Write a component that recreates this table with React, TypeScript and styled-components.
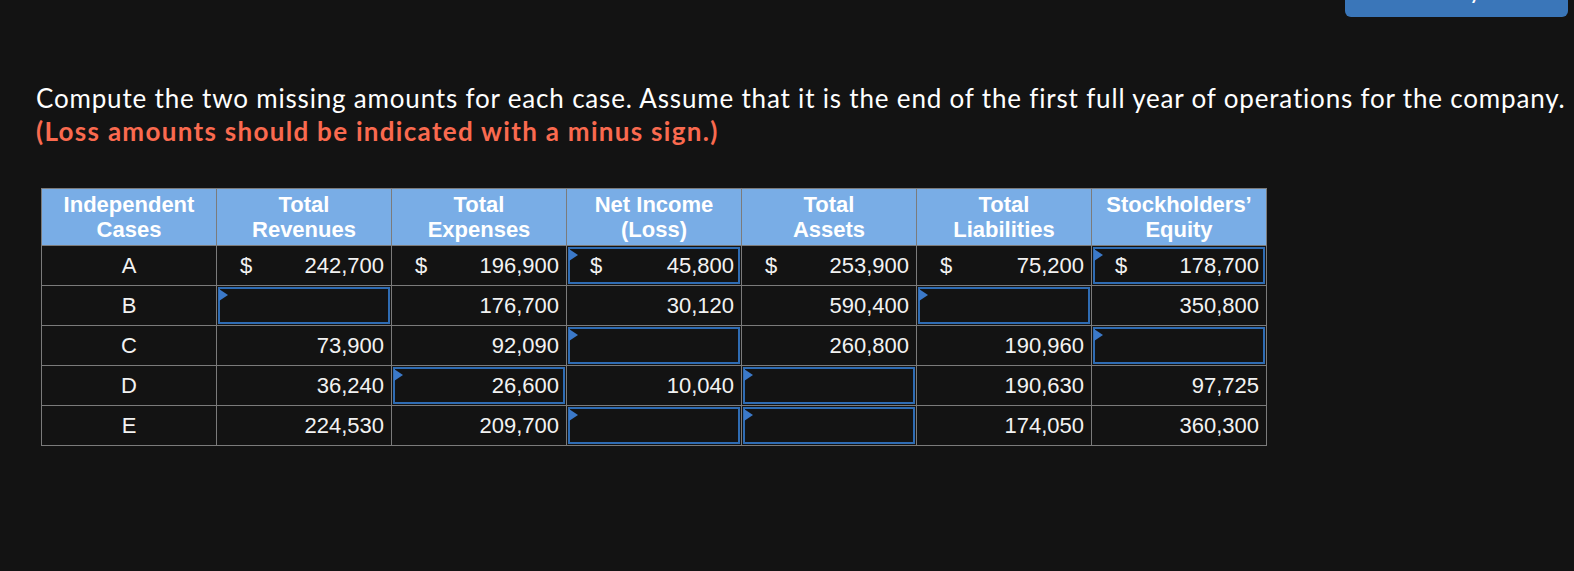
import React from "react";
import styled, { createGlobalStyle } from "styled-components";

const GlobalStyle = createGlobalStyle`
  html, body { margin: 0; padding: 0; background: #131313; }
  body { font-family: "Lato", "Liberation Sans", sans-serif; color: #ffffff; }
`;

const Page = styled.div`
  width: 1574px;
  height: 571px;
  background: #131313;
  overflow: hidden;
`;

const TopBar = styled.div`
  display: flex;
  justify-content: flex-end;
  padding-right: 6px;
  height: 17px;
  overflow: hidden;
`;

const CheckButton = styled.button`
  width: 223px;
  height: 17px;
  border: none;
  background: #3a76b9;
  border-radius: 0 0 6px 6px;
  padding: 0;
  display: flex;
  justify-content: center;
  align-items: flex-end;
  overflow: hidden;
  cursor: pointer;
`;

const ButtonLabel = styled.span`
  font-family: "Lato", "Liberation Sans", sans-serif;
  font-weight: 700;
  font-size: 18px;
  line-height: 22px;
  color: #ffffff;
  transform: translate(6px, -13px);
  white-space: nowrap;
`;

const Prompt = styled.div`
  margin-top: 65px;
  padding-left: 36px;
  font-family: "Lato", "Liberation Sans", sans-serif;
  font-size: 26px;
  line-height: 33px;
`;

const PromptLine = styled.p`
  margin: 0;
  white-space: nowrap;
  color: #ffffff;
  letter-spacing: 0.82px;
`;

const Warning = styled.p`
  margin: 0;
  white-space: nowrap;
  color: #fa6a4f;
  font-weight: 700;
  letter-spacing: 1.3px;
`;

const Table = styled.table`
  margin-top: 40px;
  margin-left: 41px;
  border-collapse: collapse;
  table-layout: fixed;
  width: 1226px;
  font-family: "Liberation Sans", Arial, sans-serif;
  font-size: 22px;
  line-height: 25px;
  color: #f2f2f2;
`;

const HeadRow = styled.tr`
  height: 57px;
`;

const BodyRow = styled.tr`
  height: 40px;
`;

const HeadCell = styled.th`
  border: 1px solid #7b7b7b;
  background: #79ade6;
  color: #ffffff;
  font-weight: 700;
  font-size: 22px;
  line-height: 25px;
  padding: 0 2px;
  text-align: center;
  vertical-align: middle;
`;

const Cell = styled.td<{ $center?: boolean }>`
  border: 1px solid #7b7b7b;
  padding: 0 ${(p) => (p.$center ? "0" : "7px")} 0 0;
  text-align: ${(p) => (p.$center ? "center" : "right")};
  vertical-align: middle;
`;

const InputCellTd = styled.td`
  border: 1px solid #7b7b7b;
  padding: 1px 1px 1px 1px;
  vertical-align: middle;
`;

const InputBox = styled.div`
  position: relative;
  box-sizing: border-box;
  height: 37px;
  border: 2px solid #2f6cb3;
  display: flex;
  align-items: center;
  justify-content: space-between;
  padding: 0 4px 0 20px;
`;

const Flag = styled.span`
  position: absolute;
  left: -1px;
  top: 0px;
  width: 0;
  height: 0;
  border-top: 6px solid transparent;
  border-bottom: 6px solid transparent;
  border-left: 9px solid #3b79c9;
`;

const Money = styled.div`
  display: flex;
  justify-content: space-between;
  align-items: center;
  padding-left: 23px;
`;

const Dollar = styled.span``;
const Amount = styled.span``;

type Val = { v?: string; dollar?: boolean; input?: boolean };

const headers = [
  ["Independent", "Cases"],
  ["Total", "Revenues"],
  ["Total", "Expenses"],
  ["Net Income", "(Loss)"],
  ["Total", "Assets"],
  ["Total", "Liabilities"],
  ["Stockholders\u2019", "Equity"],
];

const rows: { label: string; cells: Val[] }[] = [
  {
    label: "A",
    cells: [
      { v: "242,700", dollar: true },
      { v: "196,900", dollar: true },
      { v: "45,800", dollar: true, input: true },
      { v: "253,900", dollar: true },
      { v: "75,200", dollar: true },
      { v: "178,700", dollar: true, input: true },
    ],
  },
  {
    label: "B",
    cells: [
      { input: true },
      { v: "176,700" },
      { v: "30,120" },
      { v: "590,400" },
      { input: true },
      { v: "350,800" },
    ],
  },
  {
    label: "C",
    cells: [
      { v: "73,900" },
      { v: "92,090" },
      { input: true },
      { v: "260,800" },
      { v: "190,960" },
      { input: true },
    ],
  },
  {
    label: "D",
    cells: [
      { v: "36,240" },
      { v: "26,600", input: true },
      { v: "10,040" },
      { input: true },
      { v: "190,630" },
      { v: "97,725" },
    ],
  },
  {
    label: "E",
    cells: [
      { v: "224,530" },
      { v: "209,700" },
      { input: true },
      { input: true },
      { v: "174,050" },
      { v: "360,300" },
    ],
  },
];

function renderCell(c: Val, i: number) {
  if (c.input) {
    return (
      <InputCellTd key={i}>
        <InputBox>
          <Flag />
          <Dollar>{c.dollar ? "$" : ""}</Dollar>
          <Amount>{c.v ?? ""}</Amount>
        </InputBox>
      </InputCellTd>
    );
  }
  return (
    <Cell key={i}>
      {c.dollar ? (
        <Money>
          <Dollar>$</Dollar>
          <Amount>{c.v}</Amount>
        </Money>
      ) : (
        c.v
      )}
    </Cell>
  );
}

export default function App() {
  return (
    <Page>
      <GlobalStyle />
      <TopBar>
        <CheckButton>
          <ButtonLabel>Check my work</ButtonLabel>
        </CheckButton>
      </TopBar>
      <Prompt>
        <PromptLine>
          Compute the two missing amounts for each case. Assume that it is the end of the first full year of operations for the company.
        </PromptLine>
        <Warning>(Loss amounts should be indicated with a minus sign.)</Warning>
      </Prompt>
      <Table>
        <thead>
          <HeadRow>
            {headers.map((h, i) => (
              <HeadCell key={i}>
                {h[0]}
                <br />
                {h[1]}
              </HeadCell>
            ))}
          </HeadRow>
        </thead>
        <tbody>
          {rows.map((r) => (
            <BodyRow key={r.label}>
              <Cell $center>{r.label}</Cell>
              {r.cells.map(renderCell)}
            </BodyRow>
          ))}
        </tbody>
      </Table>
    </Page>
  );
}
